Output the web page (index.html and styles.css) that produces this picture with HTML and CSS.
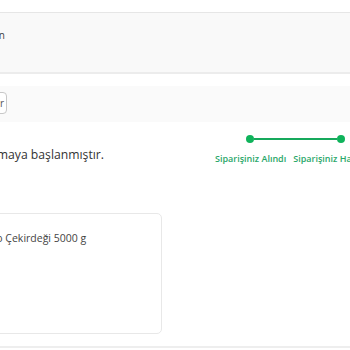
FILE: index.html
```html
<!DOCTYPE html>
<html lang="tr">
<head>
    <meta charset="UTF-8">
    <title>Sipariş Detayı</title>
    <link rel="stylesheet" href="styles.css">
</head>
<body>
    <div class="page">
        <div class="topbar"></div>
        <div class="info-band">
            <div class="info-text">
                <span>Teslimat Adresi: Kadıköy, İstanbul · Ödeme: Kapıda Ödeme · Alıcı: Ayşe Yılmaz · Not: Zili çalmadan</span>
            </div>
        </div>
        <div class="actions">
            <button class="btn-outline">Ürünleri Değerlendir</button>
        </div>

        <div class="status-row">
            <div class="status-text">
                <span>Siparişiniz hazırlanmaya başlanmıştır.</span>
            </div>
            <div class="stepper">
                <div class="step-line">
                    <span class="dot"></span>
                    <span class="bar"></span>
                    <span class="dot"></span>
                </div>
                <div class="step-labels">
                    <span>Siparişiniz Alındı</span>
                    <span>Siparişiniz Hazırlanıyor</span>
                </div>
            </div>
        </div>

        <div class="product-card">
            <span class="product-name">Çiğ Kakao Çekirdeği 5000 g</span>
        </div>

        <div class="footer-line"></div>
    </div>
</body>
</html>
```

FILE: styles.css
```css
* {
    margin: 0;
    padding: 0;
    box-sizing: border-box;
}

body {
    background-color: #fff;
    font-family: "Open Sans", sans-serif;
    overflow: hidden;
    width: 350px;
    height: 350px;
}

.page {
    margin-left: -300px;
    width: 900px;
}

.topbar {
    height: 13px;
    border-bottom: 1px solid #e6e6e6;
}

.info-band {
    height: 61px;
    background-color: #f9f9f9;
    border-bottom: 2px solid #ececec;
    padding-top: 15px;
    font-size: 10px;
    color: #444;
    white-space: nowrap;
}

.info-text {
    display: flex;
    justify-content: flex-end;
    width: 305px;
}

.actions {
    margin-top: 12px;
    height: 36px;
    background-color: #fafafa;
    padding-top: 4px;
}

.btn-outline {
    height: 22px;
    width: 307px;
    border: 1px solid #c8c8c8;
    border-radius: 4px;
    background: #fff;
    font-family: inherit;
    font-size: 10px;
    color: #555;
    text-align: right;
    padding-right: 2px;
}

.status-row {
    display: flex;
    align-items: flex-start;
    height: 91px;
    padding-top: 13px;
}

.status-text {
    display: flex;
    justify-content: flex-end;
    flex-shrink: 0;
    width: 404px;
    margin-top: 11px;
    font-size: 12.2px;
    color: #333;
    white-space: nowrap;
}

.stepper {
    display: flex;
    flex-direction: column;
    align-items: flex-start;
    flex-shrink: 0;
    margin-left: 111px;
}

.step-line {
    display: flex;
    align-items: center;
    margin-left: 31px;
}

.dot {
    width: 8px;
    height: 8px;
    border-radius: 50%;
    background-color: #0fb35b;
}

.bar {
    width: 83px;
    height: 2px;
    background-color: #16a95c;
}

.step-labels {
    display: flex;
    gap: 7px;
    margin-top: 9px;
    font-size: 9px;
    line-height: 14px;
    font-weight: 600;
    color: #2aa76a;
    white-space: nowrap;
}

.product-card {
    width: 462px;
    height: 121px;
    border: 1px solid #e8e8e8;
    border-radius: 5px;
    padding: 17px 0 0 254px;
    font-size: 10.5px;
    color: #444;
    white-space: nowrap;
}

.footer-line {
    margin-top: 12px;
    height: 2px;
    background-color: #eeeeee;
}
```
